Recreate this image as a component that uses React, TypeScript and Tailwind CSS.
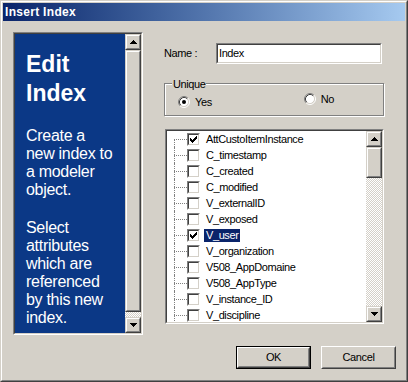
import React from "react";

const ITEMS: { label: string; checked?: boolean; selected?: boolean }[] = [
  { label: "AttCustoItemInstance", checked: true },
  { label: "C_timestamp" },
  { label: "C_created" },
  { label: "C_modified" },
  { label: "V_externalID" },
  { label: "V_exposed" },
  { label: "V_user", checked: true, selected: true },
  { label: "V_organization" },
  { label: "V508_AppDomaine" },
  { label: "V508_AppType" },
  { label: "V_instance_ID" },
  { label: "V_discipline" },
];

function Arrow({ dir }: { dir: "up" | "down" }) {
  const rows = dir === "up" ? [0, 1, 2, 3] : [3, 2, 1, 0];
  return (
    <svg width="7" height="4" viewBox="0 0 7 4" shapeRendering="crispEdges" className="block">
      {rows.map((r, i) => (
        <rect key={i} x={3 - r} y={i} width={r * 2 + 1} height={1} fill="#000" />
      ))}
    </svg>
  );
}

function Raised({ className = "", children }: { className?: string; children?: React.ReactNode }) {
  return (
    <div className={`flex border border-t-[#d4d0c8] border-l-[#d4d0c8] border-r-[#404040] border-b-[#404040] ${className}`}>
      <div className="flex flex-1 items-center justify-center border border-t-white border-l-white border-r-[#808080] border-b-[#808080] bg-[#d4d0c8]">
        {children}
      </div>
    </div>
  );
}

function ScrollBar({ thumb }: { thumb: string }) {
  return (
    <div className="flex h-full w-4 shrink-0 flex-col">
      <Raised className="h-4 w-4 shrink-0">
        <Arrow dir="up" />
      </Raised>
      <Raised className={`w-4 shrink-0 ${thumb}`} />
      <div className="flex-1 bg-[image:repeating-conic-gradient(#d4d0c8_0%_25%,#ffffff_0%_50%)] bg-[length:2px_2px]" />
      <Raised className="h-4 w-4 shrink-0">
        <Arrow dir="down" />
      </Raised>
    </div>
  );
}

function Sunken({ className = "", inner = "", children }: { className?: string; inner?: string; children?: React.ReactNode }) {
  return (
    <div className={`flex border border-t-[#808080] border-l-[#808080] border-r-white border-b-white ${className}`}>
      <div className={`flex flex-1 border border-t-[#404040] border-l-[#404040] border-r-[#d4d0c8] border-b-[#d4d0c8] ${inner}`}>
        {children}
      </div>
    </div>
  );
}

function Checkbox({ checked }: { checked?: boolean }) {
  return (
    <Sunken className="h-[13px] w-[13px] shrink-0" inner="bg-white items-center justify-center">
      {checked && (
        <svg width="7" height="7" viewBox="0 0 7 7" shapeRendering="crispEdges" className="block">
          <rect x="6" y="0" width="1" height="1" />
          <rect x="5" y="1" width="2" height="1" />
          <rect x="0" y="2" width="1" height="1" />
          <rect x="4" y="2" width="3" height="1" />
          <rect x="0" y="3" width="2" height="1" />
          <rect x="3" y="3" width="3" height="1" />
          <rect x="0" y="4" width="5" height="1" />
          <rect x="1" y="5" width="3" height="1" />
          <rect x="2" y="6" width="1" height="1" />
        </svg>
      )}
    </Sunken>
  );
}

function Radio({ checked }: { checked?: boolean }) {
  return (
    <svg width="12" height="12" viewBox="0 0 12 12" className="block shrink-0">
      <circle cx="6" cy="6" r="4.5" fill="#fff" />
      <path d="M2.11 9.89 A5.5 5.5 0 0 1 9.89 2.11" stroke="#808080" fill="none" />
      <path d="M9.89 2.11 A5.5 5.5 0 0 1 2.11 9.89" stroke="#fff" fill="none" />
      <path d="M2.82 9.18 A4.5 4.5 0 0 1 9.18 2.82" stroke="#404040" fill="none" />
      <path d="M9.18 2.82 A4.5 4.5 0 0 1 2.82 9.18" stroke="#d4d0c8" fill="none" />
      {checked && <circle cx="6" cy="6" r="2" fill="#000" />}
    </svg>
  );
}

function TreeRow({ item, first }: { item: (typeof ITEMS)[number]; first: boolean }) {
  return (
    <div className="flex h-4 items-center">
      <div className="relative h-4 w-5 shrink-0">
        <div className={`absolute left-[7px] bottom-0 border-l border-dotted border-[#808080] ${first ? "top-2" : "top-0"}`} />
        <div className="absolute left-[7px] right-0 top-2 border-t border-dotted border-[#808080]" />
      </div>
      <Checkbox checked={item.checked} />
      <span
        className={`ml-1 px-[2px] leading-[13px] ${item.selected ? "bg-[#0a246a] text-white" : "text-black"}`}
      >
        {item.label}
      </span>
    </div>
  );
}

function Button({ label, isDefault }: { label: string; isDefault?: boolean }) {
  if (isDefault) {
    return (
      <div className="flex h-[23px] w-[75px] border border-black">
        <div className="flex flex-1 border border-t-white border-l-white border-r-[#404040] border-b-[#404040]">
          <div className="flex flex-1 items-center justify-center border border-t-[#d4d0c8] border-l-[#d4d0c8] border-r-[#808080] border-b-[#808080] bg-[#d4d0c8]">
            {label}
          </div>
        </div>
      </div>
    );
  }
  return (
    <div className="flex h-[23px] w-[75px] border border-t-white border-l-white border-r-[#404040] border-b-[#404040]">
      <div className="flex flex-1 items-center justify-center border border-t-[#d4d0c8] border-l-[#d4d0c8] border-r-[#808080] border-b-[#808080] bg-[#d4d0c8]">
        {label}
      </div>
    </div>
  );
}

export default function App() {
  return (
    <div className="h-[382px] w-[408px] font-['Liberation_Sans',Arial,sans-serif] text-[11px] tracking-[-0.4px] text-black">
      <div className="flex h-full border border-t-[#d4d0c8] border-l-[#d4d0c8] border-r-[#404040] border-b-[#404040]">
        <div className="flex flex-1 flex-col border border-t-white border-l-white border-r-[#808080] border-b-[#808080] bg-[#d4d0c8] p-px">
          <div className="flex h-[18px] shrink-0 items-center bg-gradient-to-r from-[#0a246a] to-[#a6caf0] pl-[2px] text-[12px] font-bold tracking-[0.3px] text-white">
            Insert Index
          </div>

          <div className="flex pt-[11px]">
            <Sunken className="ml-[10px] h-[303px] w-[130px] shrink-0">
              <div className="flex-1 bg-[#0b3886] pl-[11px] pt-4 text-white tracking-[-0.3px]">
                <div className="text-[23px] font-bold leading-[29px] tracking-normal">
                  Edit
                  <br />
                  Index
                </div>
                <p className="mt-[19px] text-[16px] leading-[18px]">
                  Create a
                  <br />
                  new index to
                  <br />
                  a modeler
                  <br />
                  object.
                </p>
                <p className="mt-5 text-[16px] leading-[18px]">
                  Select
                  <br />
                  attributes
                  <br />
                  which are
                  <br />
                  referenced
                  <br />
                  by this new
                  <br />
                  index.
                </p>
              </div>
              <ScrollBar thumb="h-[262px]" />
            </Sunken>

            <div className="ml-[21px] flex w-[220px] flex-col">
              <div className="mt-[11px] flex items-center">
                <span className="w-[52px] shrink-0">Name :</span>
                <Sunken className="h-[21px] w-[166px]" inner="bg-white items-center pl-px">
                  Index
                </Sunken>
              </div>

              <div className="relative mt-[19px] flex h-[33px] border border-[#808080] shadow-[inset_1px_1px_0_#fff,1px_1px_0_#fff]">
                <span className="absolute -top-[8px] left-[7px] bg-[#d4d0c8] px-px">Unique</span>
                <div className="flex items-start pl-[13px]">
                  <label className="mt-[10px] flex items-center gap-[5px]">
                    <Radio checked />
                    Yes
                  </label>
                  <label className="ml-[92px] mt-[7px] flex items-center gap-[5px]">
                    <Radio />
                    No
                  </label>
                </div>
              </div>

              <Sunken className="ml-px mt-[13px] h-[195px] w-[219px]" inner="bg-white">
                <div className="flex flex-1 flex-col overflow-hidden">
                  {ITEMS.map((item, i) => (
                    <TreeRow key={item.label} item={item} first={i === 0} />
                  ))}
                </div>
                <ScrollBar thumb="h-[31px]" />
              </Sunken>
            </div>
          </div>

          <div className="mt-[11px] flex justify-end gap-[10px] pr-[9px]">
            <Button label="OK" isDefault />
            <Button label="Cancel" />
          </div>
        </div>
      </div>
    </div>
  );
}
